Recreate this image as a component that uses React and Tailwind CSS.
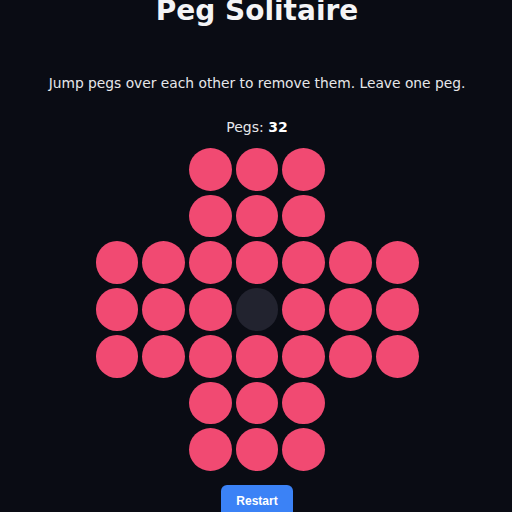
import React, { useState } from "react";

const LAYOUT = [
  "  ooo  ",
  "  ooo  ",
  "ooooooo",
  "ooo.ooo",
  "ooooooo",
  "  ooo  ",
  "  ooo  ",
];

export default function App() {
  const [board] = useState(LAYOUT.map((r) => r.split("")));
  const count = board.flat().filter((c) => c === "o").length;
  return (
    <div
      className="h-screen overflow-hidden bg-[#0a0c14] flex flex-col items-center pl-[2px] text-[#eeeff2]"
      style={{ fontFamily: '"DejaVu Sans", sans-serif' }}
    >
      <h1 className="mt-[-3px] text-[28px] leading-[28px] font-bold text-[#f4f4f6]">
        Peg Solitaire
      </h1>
      <p className="mt-[48px] text-[13.8px] leading-[20px] text-[#e6e7ea]">
        Jump pegs over each other to remove them. Leave one peg.
      </p>
      <div className="mt-[24px] text-[14px] leading-[20px] text-[#e6e7ea]">
        Pegs: <span className="font-bold text-white">{count}</span>
      </div>
      <div className="mt-[11px] grid grid-cols-7 gap-[4px] w-[323px]">
        {board.flat().map((c, i) =>
          c === " " ? (
            <div key={i} className="aspect-square" />
          ) : (
            <div
              key={i}
              className={
                "aspect-square rounded-full " +
                (c === "o" ? "bg-[#f14a72]" : "bg-[#22232f]")
              }
            />
          )
        )}
      </div>
      <button
        className="mt-[14px] px-[15px] py-[9px] rounded-[6px] bg-[#3b82f6] text-white text-[12px] leading-[14px] font-bold"
        style={{ fontFamily: '"Liberation Sans", Arial, sans-serif' }}
      >
        Restart
      </button>
    </div>
  );
}
